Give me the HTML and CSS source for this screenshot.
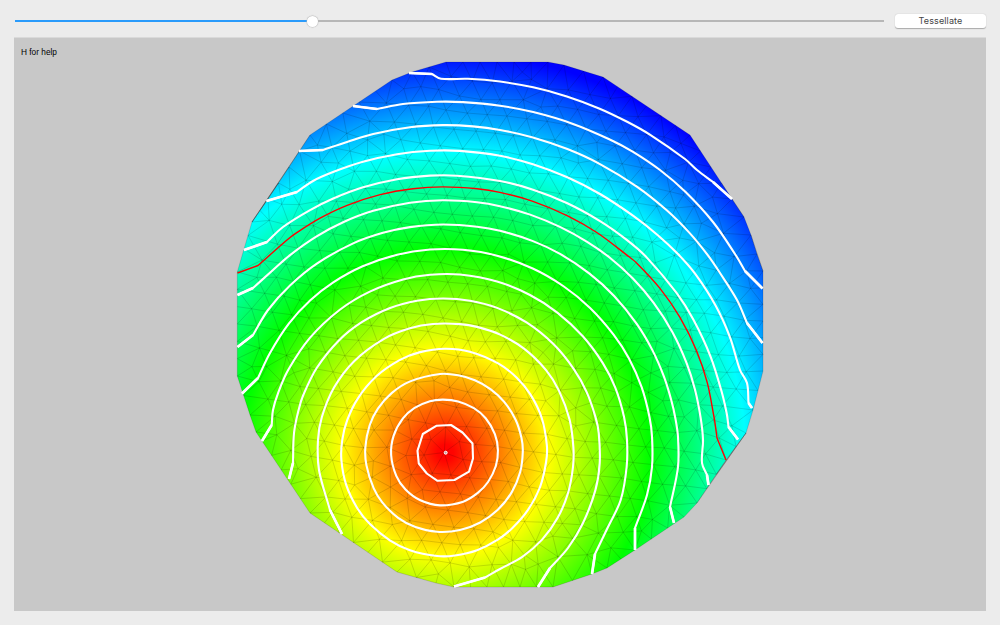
FILE: index.html
```html
<!DOCTYPE html>
<html lang="en">
<head>
<meta charset="utf-8">
<title>Tessellate</title>
<link rel="stylesheet" href="styles.css">
</head>
<body>
<div class="window">
  <header class="toolbar">
    <div class="slider"><div class="slider-fill"></div><div class="slider-knob"></div><div class="slider-rest"></div></div>
    <button class="button" type="button">Tessellate</button>
  </header>
  <main class="viewport">
    <p class="hint">H for help</p>
    <svg class="plot" viewBox="14 38 972 573" width="972" height="573">
      <defs>
        <radialGradient id="heat" gradientUnits="userSpaceOnUse" cx="445.5" cy="452.5" r="400">
          <stop offset="0" stop-color="#ff0000"/>
          <stop offset="0.02" stop-color="#ff0400"/>
          <stop offset="0.26" stop-color="#ffff00"/>
          <stop offset="0.51" stop-color="#00ff00"/>
          <stop offset="0.75" stop-color="#00ffff"/>
          <stop offset="1" stop-color="#0000ff"/>
        </radialGradient>
      </defs>
      <polygon id="disc" class="disc"/>
      <path id="mesh" class="mesh"/>
      <g id="contours"></g>
      <circle class="source" cx="445.7" cy="452.7" r="1.5"/>
    </svg>
  </main>
</div>
<script src="plot.js"></script>
</body>
</html>
```
FILE: styles.css
```css
* { box-sizing: border-box; }
body { margin: 0; background: #ececec; font-family: "Liberation Sans", Arial, sans-serif; }
.window { width: 1000px; height: 625px; padding: 0 14px 14px; display: flex; flex-direction: column; }
.toolbar { height: 38px; flex: none; display: flex; align-items: center; gap: 11px; padding: 4px 0 0 1px; }
.slider { width: 869px; display: flex; align-items: center; }
.slider-fill { width: 292px; height: 2px; background: #2a9bfb; flex: none; }
.slider-knob { width: 11px; height: 11px; border-radius: 50%; background: #fff; box-shadow: 0 0 1px 0.5px #b8b8b8; flex: none; }
.slider-rest { flex: 1; height: 2px; background: #b7b7b7; }
.button { width: 91px; height: 14px; padding: 0; border: 0; border-radius: 3px; background: #fff; box-shadow: 0 0.5px 1px #aaa; color: #444; font: 9px/14px Inter, sans-serif; letter-spacing: 0.12px; }
.viewport { flex: 1; display: grid; background: #c8c8c8; box-shadow: 0 -1px #dadada; }
.hint { grid-area: 1 / 1; margin: 0; padding: 9px 0 0 7px; font-size: 8.3px; line-height: 10px; color: #000; }
.plot { grid-area: 1 / 1; display: block; }
.disc { fill: url(#heat); }
.mesh { fill: none; stroke: #000; stroke-opacity: 0.23; stroke-width: 0.6; }
.contour { fill: none; stroke: #fff; stroke-width: 2.1; stroke-linejoin: round; }
.contour-end { fill: none; stroke: #fff; stroke-width: 2.7; }
.threshold { fill: none; stroke: #f00; stroke-width: 1.4; stroke-linejoin: round; }
.source { fill: #c8a0a0; stroke: #fff; stroke-width: 1; }
```
FILE: plot.js
```js
const parse = s => s.trim().split(/\s+/).map(p => p.split(',').map(Number));

const outline = parse('446,62 548,62 564,65 603,77 690,135 732,199 744,217 751,235 757,254 763,271 763,371 753,410 746,433 726,460 697,503 684,517 635,550 607,568 592,574 553,587 454,587 436,583 397,572 310,513 262,441 256,432 250,415 237.3,376 237.3,272 244,249 252,222 268,199 310,135 392,80 412,72');

const closed = [
  '436.7,425.7 451,425 462.5,432.5 472.5,443.5 473,458.5 469,471.7 454.5,480 437.5,480.8 426.8,473.5 418.8,463.5 417.5,450.8 422.8,434',
  '443,400.5 458,402 474,408 486,418 495,434 498,450 496,466 488,482 477,492 463,501 440,505.5 420,501 405,490 396,476 392,455 394,436 402,418 414,407 430,401.5',
  '440,374.7 458,376 475,380 491,389 504,402 515,420 522,438 523,452 520,472 511,492 498,510 480,522 460,530 437,531.5 415,528 398,518 382,503 374,488 367,465 366,447 369,425 377,408 392,393 410,381',
  '445,348.5 470,351 498,364.5 517,377 531,394 541,418 547,445 546,462 540,487 527,510 512,527 498,540 477,550 455,556.5 437,556.5 410,550 390,540 370,524 357,508 346,485 341,460 342,440 346.7,420 359,399 376.7,376.7 400,360 420,351.7'
].map(parse);

const open = [
  '454,586.5 485,577.5 500,569 523,558 543,540 558,518 568,493 573,467 572,447 568,420 560,390 546.7,370 525,348 500,335 477,327 460,324.3 433,324.3 410,328.7 383,338 355,362 333,387 322,417 318,440 319,470 330,510 342,534',
  '289,479 293,463 294,433 299,410 304,395 316.7,368 338,340 362,321.7 390,307.7 417,301 443,298.7 470,300.7 497,308 527,321.7 553,345 573,370 587,392 596,417 599,433 600,463 595,490 583,523 568,548 550,568 538,587',
  '262,441 271.7,425 273,410 278,393 288,370 310,338 340,310 370,292 403,279 430,274.5 460,274.5 497,281.7 530,295 557,313 582,337 603,363 617,387 624,417 626.8,440 626.7,467 620.7,500 608,527 595,554 592,574',
  '242,393.5 258,378 270,353 288,323 310,300 333,282 363,267 397,254 430,249.7 463,250 497,256 533,268 563,287 590,308 613,335 630,358 642,387 649,417 653,437 652,467 647,495 635,528 635,550',
  '237.5,347 253,335 268,310 290,285 317,263 353,243 383,233 410,227 443,225 477,227 500,231 533,241 560,254 590,273 613,297 638,323 652,350 663,377 672,400 675,418 678,437 678,467 670,507 674,523',
  '237.5,295 253,288 273,270 290,255 317,237 343,222 373,210 410,203 443,200.7 477,202 500,206 530,215 560,228 587,242 610,257 633,278 653,303 673,332 687,363 695,390 700,418 703,440 702,463 707,475 708.5,485',
  '244,250 267,242 283,227 310,212 333,198 363,187 397,179 430,176 457,175.7 500,181 533,190 567,204 600,222 627,239 647,257 677,293 693,320 710,357 722,393 727,415 728.5,427 738,439.5',
  '266.5,201 297,192 313,181 333,172 363,162 397,154 430,150.7 460,150.7 500,155.7 533,164 567,178 600,195 633,217 657,235 678,254 697,273 717,305 730,337 740,370 747,383 748.5,403 752,408',
  '299,151 323,150 347,142 373,133 410,127 443,125 473,126.3 500,130 533,137 567,150 600,164 637,187 667,210 690,232 707,255 720,273 737,300 747,323 762.5,343',
  '353,106 377,109 403,104 437,102 463,102.3 500,106 533,113 573,124 610,139 633,151 660,170 687,190 713,222 735,254 745,271 762.5,288.5',
  '409,73 432,74 441,78.7 468,78 500,82 533,88 567,96 600,108 627,122 650,136 685,159 697,170 713,182 732,199'
].map(parse);

const threshold = parse('237.5,273 258,265.5 287,240 297,233 320,218 347,205 380,194 413,189 443,187.3 477,189 500,192 533,201 567,217 597,233 627,255 637,263 660,288 680,317 697,350 707,383 714,417 715,423 717,438 726,460');

// Even out the distance from the source along a contour, leaving open ends alone.
function relax(p, loop) {
  const n = p.length, ox = 445.5, oy = 452.5;
  const ang = p.map(([x, y]) => Math.atan2(y - oy, x - ox));
  let rad = p.map(([x, y]) => Math.hypot(x - ox, y - oy));
  for (let pass = 0; pass < 4; pass++) {
    rad = rad.map((r, i) => !loop && (i < 3 || i > n - 5) ? r
      : (rad[(i + n - 1) % n] + 2 * r + rad[(i + 1) % n]) / 4);
  }
  return rad.map((r, i) => [ox + r * Math.cos(ang[i]), oy + r * Math.sin(ang[i])]);
}

// Catmull-Rom spline (centripetal weights); the first and last spans of open lines stay straight.
function spline(p, loop) {
  const n = p.length;
  const at = i => loop ? p[(i + n) % n] : p[Math.max(0, Math.min(n - 1, i))];
  const len = (a, b) => Math.hypot(b[0] - a[0], b[1] - a[1]);
  let d = 'M' + p[0];
  for (let i = 0; i < (loop ? n : n - 1); i++) {
    const b = at(i), c = at(i + 1);
    if (!loop && (i === 0 || i === n - 2)) { d += 'L' + c; continue; }
    const a = !loop && i === 1 ? b : at(i - 1);
    const e = !loop && i === n - 3 ? c : at(i + 2);
    const s = len(b, c), k1 = s / (len(a, b) + s) / 3, k2 = s / (len(c, e) + s) / 3;
    d += `C${b[0] + (c[0] - a[0]) * k1},${b[1] + (c[1] - a[1]) * k1} ${c[0] - (e[0] - b[0]) * k2},${c[1] - (e[1] - b[1]) * k2} ${c}`;
  }
  return d + (loop ? 'Z' : '');
}

function addPath(d, name) {
  const el = document.createElementNS('http://www.w3.org/2000/svg', 'path');
  el.setAttribute('d', d);
  el.setAttribute('class', name);
  document.getElementById('contours').appendChild(el);
}

// Mesh vertices: evenly spaced on the outline, a jittered lattice inside.
let seed = 71;
const rand = () => (seed = (seed * 16807) % 2147483647) / 2147483647;
const pts = [];
outline.forEach((a, i) => {
  const b = outline[(i + 1) % outline.length];
  const k = Math.max(1, Math.round(Math.hypot(b[0] - a[0], b[1] - a[1]) / 18));
  for (let j = 0; j < k; j++) pts.push([a[0] + (b[0] - a[0]) * j / k, a[1] + (b[1] - a[1]) * j / k]);
});
function depth(x, y) {
  let min = 1e9, inside = false;
  outline.forEach((a, i) => {
    const b = outline[(i + 1) % outline.length];
    const dx = b[0] - a[0], dy = b[1] - a[1];
    const t = Math.max(0, Math.min(1, ((x - a[0]) * dx + (y - a[1]) * dy) / (dx * dx + dy * dy)));
    min = Math.min(min, Math.hypot(x - a[0] - t * dx, y - a[1] - t * dy));
    if ((a[1] > y) !== (b[1] > y) && x < a[0] + (y - a[1]) * dx / dy) inside = !inside;
  });
  return inside ? min : -min;
}
const ca = Math.cos(0.13), sa = Math.sin(0.13);
const fixed = pts.length;
for (let r = -20; r <= 20; r++) for (let c = -18; c <= 18; c++) {
  const u = (c + (r & 1) / 2) * 20 + (rand() - 0.5) * 13, v = r * 17.2 + (rand() - 0.5) * 13;
  const x = 500 + u * ca - v * sa, y = 325 + u * sa + v * ca;
  if (depth(x, y) > 10) pts.push([x, y]);
}

// Bowyer-Watson Delaunay triangulation.
const n = pts.length;
function triangulate() {
  const all = pts.map(p => [p[0] + (rand() - 0.5) * 0.01, p[1] + (rand() - 0.5) * 0.01]).concat([[-9000, -8000], [9900, -8100], [510, 12000]]);
  const circum = (i, j, k) => {
    const [ax, ay] = all[i], [bx, by] = all[j], [cx, cy] = all[k];
    const D = 2 * (ax * (by - cy) + bx * (cy - ay) + cx * (ay - by));
    const A = ax * ax + ay * ay, B = bx * bx + by * by, C = cx * cx + cy * cy;
    const x = (A * (by - cy) + B * (cy - ay) + C * (ay - by)) / D;
    const y = (A * (cx - bx) + B * (ax - cx) + C * (bx - ax)) / D;
    return { v: [i, j, k], x, y, r: (ax - x) ** 2 + (ay - y) ** 2 };
  };
  let tris = [circum(n, n + 1, n + 2)];
  for (let i = 0; i < n; i++) {
    const edges = new Map(), keep = [];
    for (const t of tris) {
      if ((all[i][0] - t.x) ** 2 + (all[i][1] - t.y) ** 2 >= t.r) { keep.push(t); continue; }
      for (const [a, b] of [[0, 1], [1, 2], [2, 0]]) {
        const p = t.v[a], q = t.v[b], key = Math.min(p, q) + '_' + Math.max(p, q);
        if (edges.has(key)) edges.delete(key); else edges.set(key, [p, q]);
      }
    }
    for (const [p, q] of edges.values()) keep.push(circum(p, q, i));
    tris = keep;
  }
  const found = new Map();
  for (const t of tris) {
    if (t.v.some(i => i >= n)) continue;
    for (const [a, b] of [[0, 1], [1, 2], [2, 0]]) {
      const p = Math.min(t.v[a], t.v[b]), q = Math.max(t.v[a], t.v[b]);
      found.set(p + '_' + q, [p, q]);
    }
  }
  return [...found.values()];
}

// One smoothing step moves each inner vertex toward the mean of its neighbours.
let edges = triangulate();
const sum = pts.map(() => [0, 0, 0]);
for (const [p, q] of edges) for (const [a, b] of [[p, q], [q, p]]) {
  sum[a][0] += pts[b][0]; sum[a][1] += pts[b][1]; sum[a][2]++;
}
for (let i = fixed; i < n; i++) {
  pts[i] = [0, 1].map(k => pts[i][k] * 0.3 + 0.7 * sum[i][k] / sum[i][2]);
}
edges = triangulate();

document.getElementById('disc').setAttribute('points', outline.join(' '));
document.getElementById('mesh').setAttribute('d', edges.map(([p, q]) => `M${pts[p]}L${pts[q]}`).join(''));
closed.forEach((p, i) => addPath(i ? spline(relax(p, true), true) : 'M' + p.join('L') + 'Z', 'contour'));
open.forEach(p => {
  addPath(spline(relax(p, false), false), 'contour');
  addPath(`M${p[0]}L${p[1]}M${p[p.length - 2]}L${p[p.length - 1]}`, 'contour-end');
});
addPath(spline(relax(threshold, false), false), 'threshold');
```
